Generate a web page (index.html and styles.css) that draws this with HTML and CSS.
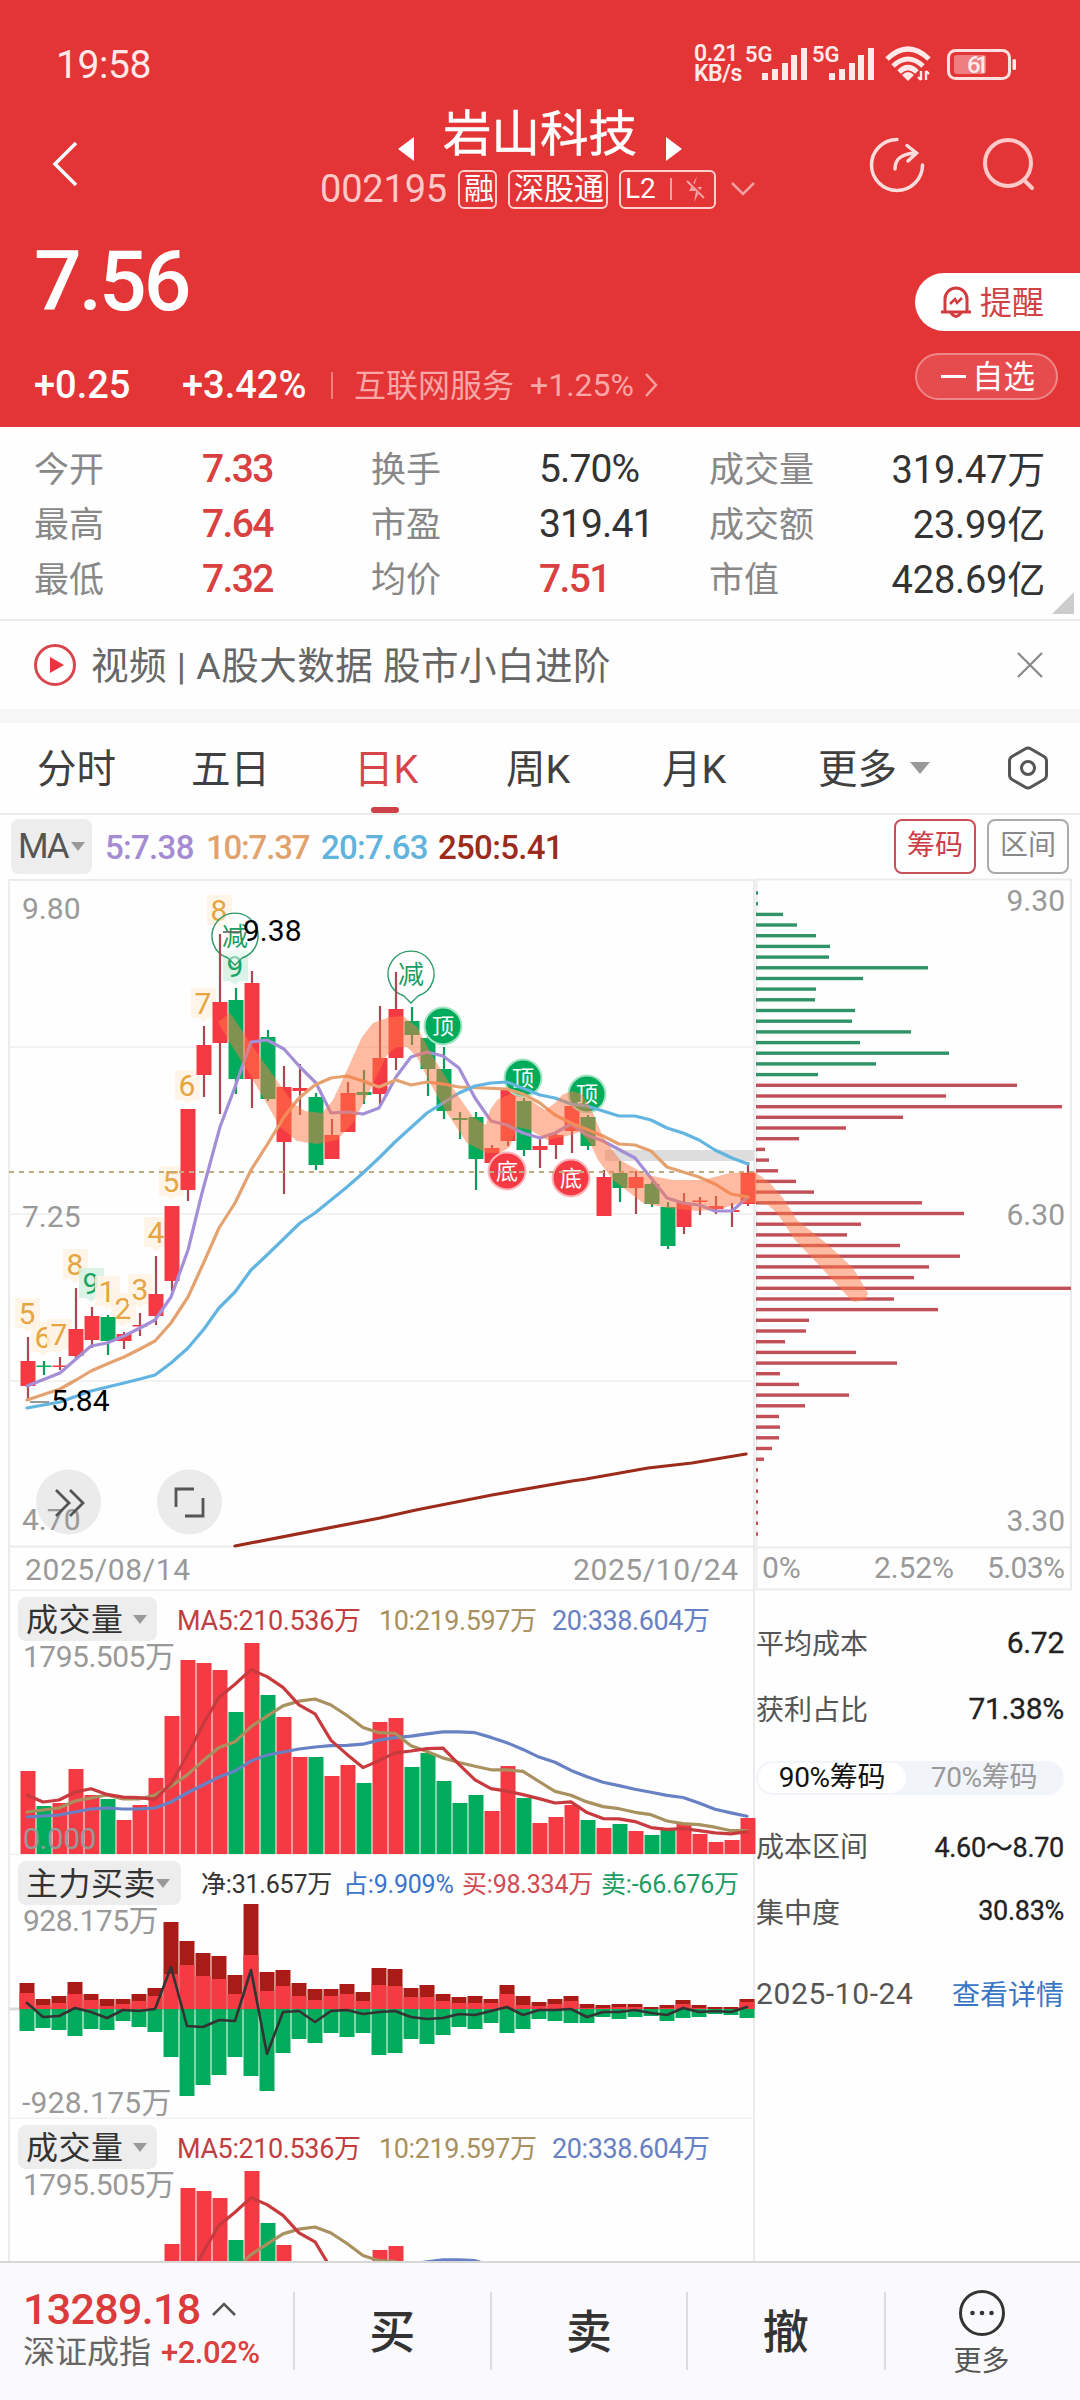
FILE: index.html
```html
<!DOCTYPE html>
<html lang="zh-CN">
<head>
  <meta charset="UTF-8">
  <meta name="viewport" content="width=device-width, initial-scale=1.0">
  <title>岩山科技 002195</title>
  <link rel="stylesheet" href="styles.css">
</head>
<body>

<header class="header">
  <div class="status-bar">
    <span class="clock">19:58</span>
    <div class="net-speed"><span>0.21</span><span>KB/s</span></div>
    <div class="signal">
      <span class="net-type">5G</span>
      <svg width="45" height="34" viewBox="0 0 45 34"><path d="M0 34v-7h6v7zM10 34V23h6v11zM20 34V17h6v17zM29 34V9h6v25zM39 34V2h6v32z"/></svg>
    </div>
    <div class="signal">
      <span class="net-type">5G</span>
      <svg width="45" height="34" viewBox="0 0 45 34"><path d="M0 34v-7h6v7zM10 34V23h6v11zM20 34V17h6v17zM29 34V9h6v25zM39 34V2h6v32z"/></svg>
    </div>
    <svg class="wifi" width="48" height="36" viewBox="0 0 48 36">
      <g fill="none" stroke="#ffe9e9" stroke-width="5"><path d="M2 13Q23-7 44 13"/><path d="M8 20Q23 6 38 20"/><path d="M14 26Q23 17 32 26"/></g>
      <path d="M17 29Q23 23 29 29L23 35z"/>
      <path d="M36 25v9M33 31l3 3M41 34v-9M44 28l-3-3" stroke="#ffe9e9" stroke-width="2.4" fill="none"/>
    </svg>
    <svg class="battery" width="70" height="32" viewBox="0 0 70 32">
      <rect x="1.5" y="1.5" width="61" height="28" rx="7" fill="none" stroke="#ffe0e0" stroke-width="3"/>
      <rect x="7" y="6" width="32" height="19" rx="3" fill="#ee7f80"/>
      <rect x="65.500" y="10" width="3.500" height="11" rx="1.500"/>
      <text x="31" y="24" text-anchor="middle" font-size="24" font-weight="500" textLength="22">61</text>
    </svg>
  </div>

  <div class="nav">
    <svg class="back" width="28" height="46" viewBox="0 0 28 46"><path d="M24 2L3 23l21 21" fill="none" stroke="#fff" stroke-width="3.500"/></svg>
    <div class="nav-center">
      <div class="nav-title">
        <svg width="16" height="24" viewBox="0 0 16 24"><path d="M16 0v24L0 12z"/></svg>
        <h1>岩山科技</h1>
        <svg width="16" height="24" viewBox="0 0 16 24"><path d="M0 0v24l16-12z"/></svg>
      </div>
      <div class="nav-sub">
        <span class="code">002195</span>
        <span class="tag">融</span>
        <span class="tag">深股通</span>
        <span class="tag tag-l2">L2<i></i><svg width="20" height="28" viewBox="0 0 20 28"><path d="M11 1L8 12h8L8 27l2-11H3z" fill="#f5a3a3"/><path d="M2 5l17 18" stroke="#e33436" stroke-width="4"/><path d="M1 6l17 17" stroke="#f5a3a3" stroke-width="2"/></svg></span>
        <svg class="down" width="24" height="14" viewBox="0 0 24 14"><path d="M1 1l11 11L23 1" fill="none" stroke="#f3a0a0" stroke-width="2.500"/></svg>
      </div>
    </div>
    <div class="nav-icons">
      <svg width="56" height="56" viewBox="0 0 56 56" fill="none" stroke="#ffdcdc" stroke-width="3.500" stroke-linecap="round"><path d="M28 2.500A25.500 25.500 0 1 0 53.500 28"/><path d="M26 32C26 22 32 17 46 16M38 8.500L47.500 16 39 24"/></svg>
      <svg width="54" height="54" viewBox="0 0 54 54" fill="none" stroke="#ffc9c9" stroke-width="4" stroke-linecap="round"><circle cx="26" cy="26" r="23"/><path d="M42 43l8 8"/></svg>
    </div>
  </div>

  <div class="quote">
    <div class="price">7.56</div>
    <div class="change-row">
      <span class="chg">+0.25</span>
      <span class="chg chg-pct">+3.42%</span>
      <span class="industry">互联网服务</span>
      <span class="industry-pct">+1.25%</span>
      <svg width="14" height="24" viewBox="0 0 14 24"><path d="M2 1l10 11L2 23" fill="none" stroke="#f7a0a0" stroke-width="2.500"/></svg>
    </div>
    <div class="actions">
      <div class="remind">
        <svg width="32" height="34" viewBox="0 0 32 34" fill="none" stroke="#d23c3e" stroke-width="3"><path d="M5 26V14a11 11 0 0 1 22 0v12M1 27h30M11 28q5 7 10 0"/><path d="M10 19l5-5 2 4 5-5" stroke-width="2.500"/></svg>
        <span>提醒</span>
      </div>
      <div class="watch"><i></i><span>自选</span></div>
    </div>
  </div>
</header>

<section class="stats">
  <span>今开</span><b class="up">7.33</b><span>换手</span><b>5.70%</b><span>成交量</span><b class="end">319.47万</b>
  <span>最高</span><b class="up">7.64</b><span>市盈</span><b>319.41</b><span>成交额</span><b class="end">23.99亿</b>
  <span>最低</span><b class="up">7.32</b><span>均价</span><b class="up">7.51</b><span>市值</span><b class="end">428.69亿</b>
</section>

<section class="notice">
  <svg width="44" height="44" viewBox="0 0 44 44"><circle cx="22" cy="22" r="19.500" fill="none" stroke="#d9474d" stroke-width="3"/><path d="M17 14v16l14-8z" fill="#e8363f"/></svg>
  <p>视频 | A股大数据 股市小白进阶</p>
  <svg class="close" width="26" height="26" viewBox="0 0 26 26"><path d="M1 1l24 24M25 1L1 25" stroke="#888" stroke-width="2.200"/></svg>
</section>

<nav class="tabs">
  <span class="tab">分时</span>
  <span class="tab">五日</span>
  <span class="tab active">日K</span>
  <span class="tab">周K</span>
  <span class="tab">月K</span>
  <span class="tab more">更多<i class="caret big"></i></span>
  <svg class="setting" width="42" height="44" viewBox="0 0 42 44" fill="none" stroke="#555" stroke-width="3"><path d="M18 3Q21 1 24 3L37 10.500Q39.500 12 39.500 15V29Q39.500 32 37 33.500L24 41Q21 43 18 41L5 33.500Q2.500 32 2.500 29V15Q2.500 12 5 10.500z"/><circle cx="21" cy="22" r="6.500"/></svg>
</nav>

<div class="ma-bar">
  <span class="pick ma-pick">MA<i class="caret"></i></span>
  <span class="ma ma5">5:7.38</span>
  <span class="ma ma10">10:7.37</span>
  <span class="ma ma20">20:7.63</span>
  <span class="ma ma250">250:5.41</span>
  <span class="box-btn on">筹码</span>
  <span class="box-btn">区间</span>
</div>

<svg id="kline" class="kline" width="1080" height="714" viewBox="0 877 1080 714"></svg>

<main class="lower">
  <div class="panels">
    <section class="panel">
      <div class="panel-head">
        <span class="pick">成交量<i class="caret"></i></span>
        <span class="v5">MA5:210.536万</span><span class="v10">10:219.597万</span><span class="v20">20:338.604万</span>
      </div>
      <svg class="vol" width="756" height="264" viewBox="0 0 756 264"></svg>
    </section>
    <section class="panel">
      <div class="panel-head fund">
        <span class="pick">主力买卖<i class="caret"></i></span>
        <span class="net">净:31.657万</span><span class="share">占:9.909%</span><span class="buy">买:98.334万</span><span class="sell">卖:-66.676万</span>
      </div>
      <svg id="fund" width="756" height="264" viewBox="0 1855 756 264"></svg>
    </section>
    <section class="panel">
      <div class="panel-head">
        <span class="pick">成交量<i class="caret"></i></span>
        <span class="v5">MA5:210.536万</span><span class="v10">10:219.597万</span><span class="v20">20:338.604万</span>
      </div>
      <svg class="vol" width="756" height="264" viewBox="0 0 756 264"></svg>
    </section>
  </div>
  <aside class="chips">
    <div class="chip-row"><span>平均成本</span><b>6.72</b></div>
    <div class="chip-row"><span>获利占比</span><b>71.38%</b></div>
    <div class="toggle"><span class="sel">90%筹码</span><span>70%筹码</span></div>
    <div class="chip-row small"><span>成本区间</span><b>4.60～8.70</b></div>
    <div class="chip-row small"><span>集中度</span><b>30.83%</b></div>
    <div class="chip-row date"><span>2025-10-24</span><a>查看详情</a></div>
  </aside>
</main>

<footer class="footer">
  <div class="index">
    <div class="index-val">13289.18<svg width="24" height="14" viewBox="0 0 24 14"><path d="M1 13L12 2l11 11" fill="none" stroke="#555" stroke-width="2.500"/></svg></div>
    <div class="index-name">深证成指<em>+2.02%</em></div>
  </div>
  <div class="trade">买</div>
  <div class="trade">卖</div>
  <div class="trade">撤</div>
  <div class="foot-more">
    <svg width="48" height="48" viewBox="0 0 48 48"><circle cx="24" cy="24" r="21.500" fill="none" stroke="#333" stroke-width="3"/><g fill="#333"><circle cx="14.500" cy="24" r="2.300"/><circle cx="24" cy="24" r="2.300"/><circle cx="33.500" cy="24" r="2.300"/></g></svg>
    更多
  </div>
</footer>

<script src="charts.js"></script>
</body>
</html>
```

FILE: styles.css
```css
* {
  box-sizing: border-box;
}
body {
  margin: 0;
  width: 1080px;
  height: 2400px;
  overflow: hidden;
  display: flex;
  flex-direction: column;
  background: #fefefe;
  color: #333;
  font-family: Roboto, "Noto Sans CJK SC", sans-serif;
}
svg {
  display: block;
  flex: none;
}
b, em, i {
  font-style: normal;
  font-weight: 400;
}
.up { color: #d9403f; }

/* header */
.header {
  height: 427px;
  flex: none;
  background: #e33436;
  color: #fff;
  fill: #fff;
}
.status-bar {
  height: 102px;
  padding: 44px 0 0 56px;
  display: flex;
  align-items: flex-start;
  color: #ffe9e9;
  fill: #ffe9e9;
}
.clock {
  font-size: 39px;
  line-height: 42px;
  width: 638px;
  letter-spacing: -0.4px;
}
.net-speed {
  display: flex;
  flex-direction: column;
  width: 51px;
  font-size: 23px;
  font-weight: 600;
  line-height: 20px;
  letter-spacing: -0.5px;
}
.signal {
  position: relative;
  width: 67px;
  padding: 2px 0 0 17px;
}
.net-type {
  position: absolute;
  left: 0;
  top: -2px;
  font-size: 22px;
  font-weight: 600;
  line-height: 26px;
}
.wifi { margin: 2px 0 0 6px; }
.battery { margin: 5px 0 0 14px; }
.nav {
  height: 118px;
  display: flex;
  position: relative;
}
.back { margin: 39px 0 0 52px; }
.nav-center {
  margin-left: 240px;
  width: 440px;
}
.nav-title {
  display: flex;
  height: 62px;
  padding-left: 78px;
}
.nav-title svg { margin-top: 35px; }
h1 {
  margin: 0 29px;
  padding-top: 2px;
  font-size: 48.5px;
  font-weight: 400;
  line-height: 62px;
  width: 194px;
  white-space: nowrap;
  -webkit-text-stroke: 0.5px #fff;
}
.nav-sub {
  display: flex;
  align-items: center;
  height: 50px;
}
.code {
  font-size: 38px;
  color: #ffc8c8;
  width: 138px;
  letter-spacing: -0.2px;
}
.tag {
  height: 39px;
  margin-right: 11px;
  padding: 0 4px;
  border: 2px solid #ffd0d0;
  border-radius: 6px;
  font-size: 30px;
  line-height: 34px;
  display: flex;
  align-items: center;
  white-space: nowrap;
}
.tag:nth-child(2) { width: 39px; }
.tag:nth-child(3) { width: 100px; }
.tag-l2 {
  width: 97px;
  font-size: 28px;
}
.tag-l2 i {
  width: 2px;
  height: 22px;
  background: #f3a0a0;
  margin: 0 14px 0 14px;
}
.down { margin-left: 4px; }
.nav-icons {
  display: flex;
  gap: 57px;
  position: absolute;
  left: 869px;
  top: 35px;
}
.quote {
  position: relative;
  padding-left: 34px;
}
.price {
  font-size: 84px;
  font-weight: 500;
  line-height: 84px;
  padding-top: 20px;
  height: 135px;
  letter-spacing: -3px;
}
.change-row {
  display: flex;
  align-items: center;
  height: 60px;
  font-size: 32px;
  color: #f9a6a6;
}
.chg {
  font-size: 38px;
  font-weight: 500;
  color: #fff;
  width: 148px;
  letter-spacing: 0;
}
.chg-pct {
  width: 151px;
  position: relative;
}
.chg-pct::after {
  content: "";
  position: absolute;
  right: 0;
  top: 9px;
  height: 27px;
  border-right: 2px solid #f08080;
}
.industry {
  margin-left: 21px;
  margin-bottom: 4px;
  width: 176px;
}
.industry-pct {
  width: 114px;
}
.actions {
  position: absolute;
  right: 0;
  top: 53px;
  width: 165px;
}
.remind {
  height: 58px;
  border-radius: 29px 0 0 29px;
  background: #fff;
  color: #cf4345;
  font-size: 32px;
  display: flex;
  align-items: center;
  gap: 8px;
  padding-left: 25px;
}
.actions span { margin-bottom: 5px; }
.watch {
  width: 143px;
  height: 47px;
  margin-top: 22px;
  border: 2px solid #ef8788;
  border-radius: 24px;
  background: #e64c4e;
  font-size: 31.5px;
  display: flex;
  align-items: center;
  padding-left: 24px;
}
.watch i {
  width: 25px;
  height: 3px;
  background: #fff;
  margin-right: 6px;
}

/* key figures */
.stats {
  position: relative;
  flex: none;
  height: 194px;
  padding: 14px 35px 0 34px;
  border-bottom: 2px solid #eaeaea;
  display: grid;
  grid-template-columns: 168px 169px 168px 170px 130px 206px;
  grid-auto-rows: 55px;
  align-items: center;
  font-size: 35px;
  color: #888;
}
.stats span { margin-bottom: 5px; }
.stats b {
  font-size: 39px;
  color: #333;
  letter-spacing: -0.9px;
}
.stats b.up {
  color: #d9403f;
  font-weight: 500;
  letter-spacing: -1.6px;
}
.stats .end {
  margin-bottom: 5px;
  text-align: right;
  font-size: 38px;
  letter-spacing: -0.2px;
}
.stats::after {
  content: "";
  position: absolute;
  right: 6px;
  bottom: 5px;
  border: 11px solid transparent;
  border-right-color: #ccc;
  border-bottom-color: #ccc;
}
.notice {
  flex: none;
  height: 102px;
  border-bottom: 14px solid #f7f7f7;
  padding-left: 33px;
  display: flex;
  align-items: center;
}
.notice p {
  margin: 0 0 5px 14px;
  width: 926px;
  font-size: 37.5px;
  letter-spacing: 0.5px;
  color: #666;
}

/* period tabs */
.tabs {
  position: relative;
  flex: none;
  height: 92px;
  border-bottom: 2px solid #ececec;
  padding-left: 37px;
  display: flex;
  align-items: center;
  font-size: 39.5px;
  color: #404040;
}
.tab {
  width: 154px;
  margin-bottom: 6px;
}
.tab:nth-child(2) { width: 163px; }
.tab.active {
  width: 152px;
  color: #d9444b;
  position: relative;
}
.tab.active::after {
  content: "";
  position: absolute;
  left: 17px;
  bottom: -19px;
  width: 28px;
  height: 6px;
  border-radius: 3px;
  background: #cf4149;
}
.tab:nth-child(4) { width: 156px; }
.tab:nth-child(5) { width: 156px; }
.tab.more {
  width: 189px;
  display: flex;
  align-items: center;
}
.caret {
  display: inline-block;
  border: 7px solid transparent;
  border-top: 9px solid #999;
  border-bottom: 0;
}
.caret.big {
  border-width: 12px 10px 0;
  margin: 6px 0 0 13px;
}
.ma-bar {
  flex: none;
  height: 62px;
  padding: 4px 0 3px 11px;
  display: flex;
  align-items: center;
  font-size: 33px;
}
.pick {
  background: #ededed;
  border-radius: 8px;
  display: flex;
  align-items: center;
}
.ma-pick {
  width: 81px;
  height: 55px;
  padding-left: 7px;
  font-size: 35px;
  color: #555;
  margin-right: 13px;
  letter-spacing: -2px;
}
.ma-pick .caret { margin-left: 3px; }
.ma { font-weight: 500; letter-spacing: -0.7px; padding-top: 2px; }
.ma5 { width: 101px; color: #a48bd3; }
.ma10 { width: 115px; letter-spacing: -1.2px; color: #e2a26c; }
.ma20 { width: 117px; color: #5fb3dd; }
.ma250 { width: 456px; color: #9d2b1c; }
.box-btn {
  width: 82px;
  height: 55px;
  margin-right: 11px;
  border: 2px solid #aaa;
  border-radius: 8px;
  font-size: 28px;
  line-height: 50px;
  text-align: center;
  color: #888;
}
.box-btn.on {
  border-color: #c65058;
  color: #cc3f49;
}

/* k-line chart */
.kline text { font-size: 30px; fill: #999; }
.kline .tip { fill: #000; }
.kline .badge { font-size: 22px; fill: #fff; text-anchor: middle; }
.kline .cut { font-size: 26px; fill: #1b9c62; text-anchor: middle; }
.kline .seq { font-size: 30px; fill: #e6a53e; text-anchor: middle; }
.kline .seq.nine { fill: #19a564; }
.line { fill: none; stroke-width: 3.2; stroke-linejoin: round; stroke-linecap: round; }
.red { fill: #f53a43; }
.green { fill: #00ab5c; }
.dark-red { fill: #aa1a16; }

/* indicator panels */
.lower {
  flex: none;
  height: 670px;
  overflow: hidden;
  display: grid;
  grid-template-columns: 756px 308px;
}
.panel {
  position: relative;
  height: 264px;
}
.panel-head {
  position: absolute;
  left: 18px;
  top: 6px;
  z-index: 1;
  height: 44px;
  display: flex;
  align-items: center;
  font-size: 27px;
  white-space: nowrap;
  letter-spacing: -0.4px;
}
.panel-head .pick {
  width: 139px;
  height: 44px;
  padding: 0 0 4px 8px;
  font-size: 32px;
  letter-spacing: 0.5px;
  margin-right: 20px;
}
.panel-head .caret { margin: 4px 0 0 9px; }
.panel-head > span:not(.pick) { margin-bottom: 2px; }
.v5 { color: #c33d40; width: 202px; }
.v10 { color: #a9905f; width: 173px; }
.v20 { color: #6781c4; }
.panel-head.fund { font-size: 25px; letter-spacing: -0.2px; }
.fund .pick { width: 163px; margin-right: 20px; }
.fund .pick .caret { margin-left: 0; }
.net { width: 142px; color: #333; }
.share { width: 119px; color: #3a74cb; }
.buy { width: 139px; color: #d04a50; }
.sell { color: #1e9c62; }
.panel text { font-size: 30px; fill: #999; letter-spacing: -0.5px; }

/* cost distribution */
.chips {
  padding-top: 18px;
  font-size: 28px;
  color: #555;
}
.chip-row {
  height: 66px;
  display: flex;
  align-items: center;
  justify-content: space-between;
}
.chip-row b {
  font-size: 30px;
  font-weight: 400;
  letter-spacing: -0.3px;
  color: #222;
  -webkit-text-stroke: 0.3px #222;
}
.chip-row.small b { font-size: 27px; }
.chip-row a { color: #3a76c4; }
.chip-row.date { margin-top: 16px; }
.chip-row.date span { font-size: 30px; letter-spacing: 0.6px; }
.toggle {
  height: 34px;
  margin: 20px 0 17px;
  padding: 2px;
  border-radius: 17px;
  background: #f1f5fa;
  display: flex;
  font-size: 28px;
  line-height: 29px;
  letter-spacing: -0.3px;
  color: #999;
}
.toggle span {
  width: 156px;
  text-align: center;
  white-space: nowrap;
}
.toggle .sel {
  width: 148px;
  border-radius: 15px;
  background: #fff;
  color: #111;
}

/* bottom bar */
.footer {
  flex: 1;
  border-top: 2px solid #d6d7da;
  background: #fafafc;
  display: flex;
  padding-left: 23px;
}
.index {
  width: 270px;
  padding-top: 22px;
}
.index-val {
  display: flex;
  align-items: center;
  gap: 12px;
  font-size: 43px;
  font-weight: 500;
  line-height: 48px;
  color: #dc3b3b;
  letter-spacing: -0.7px;
}
.index-name {
  font-size: 32px;
  line-height: 38px;
  color: #666;
}
.index-name em {
  margin-left: 10px;
  font-size: 31px;
  color: #d9403f;
  font-weight: 500;
  letter-spacing: -0.5px;
}
.trade {
  width: 197px;
  height: 78px;
  margin-top: 29px;
  border-left: 2px solid #ddd;
  font-size: 46px;
  font-weight: 500;
  line-height: 80px;
  text-align: center;
}
.foot-more {
  width: 197px;
  padding-top: 26px;
  display: flex;
  flex-direction: column;
  align-items: center;
  font-size: 28px;
  line-height: 50px;
  color: #555;
  position: relative;
}
.foot-more::before {
  content: "";
  position: absolute;
  left: 1px;
  top: 29px;
  height: 78px;
  border-left: 2px solid #ddd;
}
```

FILE: charts.js
```js
const X0 = 28;
const STEP = 16;
const cx = i => X0 + i * STEP;

// [colour, high, body top, body bottom, low]
const candles = [
  ['r', 1337, 1361, 1386, 1399], ['g', 1361, 1365.5, 1366.5, 1375], ['r', 1357, 1365.5, 1366.5, 1370],
  ['r', 1288, 1329, 1356, 1358], ['r', 1307, 1316, 1340, 1348], ['g', 1315, 1317, 1341, 1355],
  ['r', 1332, 1334, 1341, 1349], ['r', 1313, 1325, 1326, 1336], ['r', 1256, 1294, 1316, 1325],
  ['r', 1206, 1206, 1281, 1291], ['r', 1109, 1109, 1190, 1201], ['r', 1026, 1045, 1075, 1097],
  ['r', 934, 1002, 1043, 1114], ['g', 988, 1000, 1079, 1094], ['r', 971, 983, 1079, 1108],
  ['g', 1030, 1037, 1099, 1101], ['r', 1066, 1087, 1142, 1194], ['r', 1064, 1088, 1091, 1115],
  ['g', 1093, 1097, 1165, 1170], ['r', 1119, 1135, 1159, 1159], ['r', 1082, 1093, 1132, 1132],
  ['g', 1070, 1092, 1095, 1104], ['r', 1006, 1058, 1094, 1105], ['r', 972, 1009, 1058, 1070],
  ['g', 1007, 1021, 1035, 1045], ['g', 1018, 1038, 1069, 1096], ['g', 1047, 1069, 1111, 1119],
  ['g', 1112, 1118, 1120, 1139], ['g', 1112, 1117, 1159, 1190], ['r', 1145, 1148, 1163, 1180],
  ['r', 1068, 1090, 1141, 1146], ['g', 1098, 1101, 1150, 1156], ['r', 1138, 1146, 1150, 1168],
  ['r', 1132, 1135, 1145, 1159], ['r', 1098, 1106, 1131, 1153], ['g', 1115, 1117, 1146, 1150],
  ['r', 1170, 1177, 1216, 1216], ['g', 1161, 1173, 1188, 1202], ['r', 1171, 1177, 1188, 1214],
  ['g', 1182, 1184, 1204, 1207], ['g', 1202, 1207, 1246, 1249], ['r', 1193, 1203, 1227, 1234],
  ['r', 1197, 1200.5, 1202, 1215], ['r', 1196, 1206, 1209, 1214], ['r', 1203, 1210, 1212, 1227],
  ['r', 1162, 1173, 1204, 1206]
];

const maLines = {
  '#a48fd6': '27,1386 60,1373 76,1359 91,1346 107,1343 124,1336 140,1328 155,1320 171,1297 188,1250 202,1193 220,1127 235,1087 251,1042 267,1040 284,1049 300,1067 316,1083 331,1113 347,1112 363,1114 379,1108 396,1077 411,1057 427,1052 443,1056 459,1068 475,1098 491,1121 507,1125 523,1133 540,1138 555,1133 571,1124 587,1135 603,1141 635,1158 667,1198 683,1203 699,1205 715,1211 732,1211 748,1197',
  '#e5a271': '27,1400 60,1389 76,1380 91,1371 107,1364 124,1357 140,1349 155,1341 171,1323 188,1297 204,1262 219,1228 235,1203 251,1170 267,1145 284,1117 299,1098 315,1085 331,1078 347,1076 363,1081 379,1087 396,1080 411,1085 427,1082 443,1084 459,1087 507,1089 523,1094 540,1103 555,1115 571,1123 603,1136 619,1144 635,1145 651,1151 667,1167 699,1177 715,1184 731,1194 748,1197',
  '#62b5e0': '27,1408 60,1402 91,1391 124,1383 140,1379 155,1375 171,1363 188,1348 204,1329 219,1308 235,1292 251,1270 267,1255 300,1223 315,1213 347,1187 363,1173 380,1157 395,1142 427,1113 459,1093 475,1086 491,1083 507,1082 540,1095 555,1098 571,1104 587,1106 619,1116 635,1116 651,1120 667,1128 683,1133 699,1140 715,1150 732,1158 748,1164',
  '#9d2b1c': '235,1546 380,1518 416,1510 492,1495 572,1481 586,1479 648,1468 692,1463 746,1454'
};

// highlighter stroke drawn over the price
const band = '218,1022 230,1013 260,1057 293,1103 305,1111 322,1113 333,1100 347,1070 362,1037 373,1023 390,1017 403,1016 417,1027 433,1057 452,1087 473,1117 486,1125 490,1110 497,1100 510,1094 527,1098 545,1110 555,1103 562,1095 572,1091 582,1094 593,1113 603,1137 620,1160 647,1175 673,1180 703,1180 730,1173 755,1172 770,1183 783,1198 797,1220 826,1243 853,1268 868,1293 866,1299 855,1302 851,1300 817,1263 795,1240 777,1213 768,1205 757,1203 740,1203 720,1209 697,1211 667,1208 643,1203 613,1180 598,1160 590,1143 580,1132 567,1136 547,1140 530,1130 517,1127 510,1147 500,1153 487,1153 467,1143 447,1113 430,1083 417,1057 407,1047 397,1047 387,1055 370,1090 353,1123 337,1140 317,1144 297,1141 280,1127 263,1097 247,1070 230,1043';

const chipWidths = [2, 2, 27, 41, 60, 74, 73, 172, 107, 60, 59, 99, 96, 155, 104, 193, 120, 62,
  261, 190, 306, 147, 90, 43, 9, 13, 22, 40, 58, 166, 208, 105, 91, 144, 204, 173, 158, 315, 138, 182,
  53, 50, 29, 100, 141, 24, 43, 93, 49, 23, 24, 23, 16, 8, 2, 2, 2, 2, 2, 2, 2];

const seq = [[27, 1313, 5], [43, 1337, 6], [59, 1334, 7], [75, 1264, 8], [91, 1283, 9], [107, 1291, 1],
  [123, 1308, 2], [140, 1289, 3], [156, 1232, 4], [171, 1181, 5], [187, 1085, 6], [203, 1003, 7], [219, 910, 8], [235, 966, 9]];

const balloons = [[235, 936], [411, 974]];

function rect(x, y, w, h, cls) {
  return `<rect x="${x}" y="${y}" width="${w}" height="${h}" class="${cls}"/>`;
}
function poly(points, color, width) {
  return `<polyline class="line" points="${points}" stroke="${color}"${width ? ` style="stroke-width:${width}"` : ''}/>`;
}
function hline(x1, x2, y, color, width) {
  return `<path d="M${x1} ${y}H${x2}" stroke="${color}" stroke-width="${width}"/>`;
}

function balloon(x, y) {
  return `<path d="M${x - 7} ${y + 22}A23 23 0 1 1 ${x + 7} ${y + 22}L${x} ${y + 29}z" fill="#fff" fill-opacity=".5" stroke="#2a9a66" stroke-width="1.4"/>
    <text class="cut" x="${x}" y="${y + 10}">减</text>`;
}
function badge(x, y, label, color, glow) {
  return `<circle cx="${x}" cy="${y}" r="18.500" fill="${color}" stroke="${glow}" stroke-width="2"/><text class="badge" x="${x}" y="${y + 8}">${label}</text>`;
}

function drawKline() {
  let s = '';
  // frames and grid
  s += '<g fill="none" stroke="#ebebeb" stroke-width="2"><path d="M9 1591V880H754V1591"/><path d="M756.500 879.500H1071V1589.500H756.500z"/><path d="M9 1546.500H754M756 1547.500H1071M9 1590.500H754"/></g>';
  [1047, 1214, 1381].forEach(y => { s += hline(9, 754, y, '#f2f2f2', 2); });
  s += '<text x="22" y="919">9.80</text><text x="22" y="1227">7.25</text>';
  s += '<text x="25" y="1580" textLength="165">2025/08/14</text><text x="573" y="1580" textLength="165">2025/10/24</text>';
  s += '<rect x="605" y="1150" width="149" height="11" fill="#ddd"/>';

  seq.forEach(([x, y, n]) => {
    const nine = n === 9;
    s += `<path d="M${x - 12} ${y - 15}h25v30h-8l-5 4-5-4h-7z" fill="${nine ? '#d3f1e2' : '#fff2e4'}" fill-opacity=".85"/>`;
    s += `<text class="seq${nine ? ' nine' : ''}" x="${x}" y="${y + 11}">${n}</text>`;
  });
  balloons.forEach(p => { s += balloon(p[0], p[1]); });

  candles.forEach(([c, hi, top, bot, lo], i) => {
    const x = cx(i);
    const fill = c === 'r' ? 'red' : 'green';
    const wick = c === 'r' ? '#aa4a50' : '#0f9a59';
    s += `<path d="M${x} ${hi}V${lo}" stroke="${wick}" stroke-width="2.2"/>`;
    s += rect(x - 7.5, top, 15, Math.max(bot - top, 1.5), fill);
  });

  s += badge(443, 1026, '顶', '#00ab5c', '#a5e5c6') + badge(523, 1078, '顶', '#00ab5c', '#a5e5c6') + badge(587, 1094, '顶', '#00ab5c', '#a5e5c6');
  s += badge(507, 1171, '底', '#f53a43', '#fcb5ba') + badge(571, 1178, '底', '#f53a43', '#fcb5ba');
  s += '<path d="M9 1172H754" stroke="#c1ab80" stroke-width="2" stroke-dasharray="5 5"/>';

  // chip distribution bars
  chipWidths.forEach((w, i) => {
    s += `<rect x="756" y="${(891.3 + i * 10.683).toFixed(1)}" width="${w}" height="3.400" fill="${i < 18 ? '#2e9468' : '#c04f57'}"/>`;
  });
  Object.keys(maLines).forEach(color => { s += poly(maLines[color], color); });
  s += `<polygon points="${band}" fill="#ff7744" fill-opacity=".5"/>`;

  s += '<text x="1065" y="911" text-anchor="end">9.30</text><text x="1065" y="1225" text-anchor="end">6.30</text><text x="1065" y="1531" text-anchor="end">3.30</text>';
  s += '<text x="762" y="1578">0%</text><text x="954" y="1578" text-anchor="end" textLength="80">2.52%</text><text x="1065" y="1578" text-anchor="end" textLength="78">5.03%</text>';
  s += hline(223, 241, 932, '#555', 1.5) + '<text class="tip" x="243" y="941">9.38</text>';
  s += hline(30, 49, 1402, '#777', 1.5) + '<text class="tip" x="51" y="1411">5.84</text>';

  s += '<circle cx="68.500" cy="1502" r="32.500" fill="#ddd" fill-opacity=".6"/><circle cx="189.500" cy="1502" r="32.500" fill="#ddd" fill-opacity=".6"/>';
  s += '<text x="22" y="1530">4.70</text>';
  s += '<path d="M56 1490l13 13-13 13M70 1490l13 13-13 13M176 1507v-18h18M203 1498v18h-18" fill="none" stroke="#555" stroke-width="2.800"/>';
  document.getElementById('kline').innerHTML = s;
}

const volume = [83, -48, 51, 85, 59, -55, 34, 49, 76, 138, 194, 191, 184, -142, 211, -159, 137, 97, -97, 78, 89, -71,
  132, 136, -87, -101, -73, -51, -59, 43, 88, -56, 31, 37, 49, -34, 26, -30, 23, -19, -25, 30, 20, 12, 14, 36];

// moving average; the first values come from bars left of the view
function average(n, head) {
  return volume.map((v, i) => {
    if (i < head.length) return head[i];
    let sum = 0;
    for (let k = i - n + 1; k <= i; k++) sum += Math.abs(volume[k]);
    return sum / n;
  });
}

function drawVolume(svg, index) {
  const base = 263;
  let s = '<path d="M9 0V264M754 0V264" stroke="#ebebeb" stroke-width="2"/>' + hline(9, 754, 263.5, '#f0f0f0', 2);
  volume.forEach((v, i) => {
    const h = Math.abs(v);
    s += rect(cx(i) - 7.5, base - h, 15, h, v > 0 ? 'red' : 'green');
  });
  const toPoints = a => a.map((v, i) => `${cx(i) - 1},${(base - v).toFixed(1)}`).join(' ');
  s += poly(toPoints(average(20, [37, 38, 39, 42, 45, 46, 45, 45, 46, 52, 61, 69, 77, 83, 93, 99, 102, 105, 107])), '#6781c4');
  s += poly(toPoints(average(10, [42, 44, 46, 53, 56, 59, 55, 55, 59])), '#a9905f');
  s += poly(toPoints(average(5, [59, 52, 54, 62])), '#c93a3e');
  s += '<text x="23" y="76">1795.505万</text>';
  // the lower axis label of the last panel is below the fold
  if (index === 0) s += '<text x="23" y="258">0.000</text>';
  svg.innerHTML = s;
}

// [top, split, bottom, net] measured from the zero line
const fund = [[26, 16, 22, 6], [10, 4, 19, -8], [13, 6, 21, -7], [27, 15, 27, 1], [15, 9, 20, -3], [10, 3, 21, -9], [10, 5, 12, -1],
  [15, 8, 18, -2], [21, 13, 23, 0], [87, 35, 48, 42], [68, 44, 87, -17], [56, 33, 76, -18], [53, 30, 66, -11], [34, 15, 48, -12],
  [105, 54, 67, 39], [37, 18, 82, -45], [39, 23, 44, -3], [26, 13, 30, -2], [20, 9, 34, -13], [20, 13, 24, -2], [25, 15, 28, -1],
  [17, 8, 24, -5], [41, 24, 46, -3], [40, 23, 44, -2], [21, 12, 30, -8], [24, 12, 35, -10], [15, 8, 26, -9], [12, 6, 18, -5],
  [13, 6, 20, -6], [10, 6, 14, -2], [24, 15, 24, 2], [13, 4, 20, -6], [7, 3, 10, -1], [10, 5, 12, -1], [13, 8, 14, 0],
  [5, 1, 14, -8], [4, 1, 8, -3], [5, 2, 10, -3], [5, 2, 8, -1], [2, 0, 7, -4], [4, 1, 12, -6], [9, 5, 9, 1], [4, 1, 8, -3],
  [2, 0, 5, -2], [2, 0, 6, -3], [10, 7, 9, 2]];

function drawFund() {
  const zero = 2009;
  let s = '<path d="M9 1855V2119M754 1855V2119" stroke="#ebebeb" stroke-width="2"/>' + hline(9, 754, zero, '#ddd', 3) + hline(9, 754, 2118.5, '#f0f0f0', 2);
  fund.forEach(([top, split, bottom], i) => {
    const x = cx(i) - 8.5;
    s += rect(x, zero - top, 15, top, 'dark-red');
    s += rect(x, zero - split, 15, split, 'red');
    s += rect(x, zero, 15, bottom, 'green');
  });
  s += poly(fund.map((f, i) => `${cx(i) - 1},${zero - f[3]}`).join(' '), '#333', 2.6);
  s += '<text x="23" y="1931">928.175万</text><text x="22" y="2113" textLength="149">-928.175万</text>';
  document.getElementById('fund').innerHTML = s;
}

drawKline();
document.querySelectorAll('.vol').forEach(drawVolume);
drawFund();
```
